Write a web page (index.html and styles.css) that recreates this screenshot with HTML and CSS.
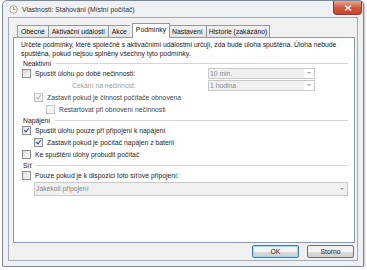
FILE: index.html
```html
<!DOCTYPE html>
<html lang="cs">
<head>
    <meta charset="UTF-8">
    <title>Vlastnosti: Stahování (Místní počítač)</title>
    <link rel="stylesheet" href="styles.css">
</head>
<body>
    <div class="window">
        <div class="titlebar">
            <svg class="app-icon" width="9" height="9" viewBox="0 0 10 10">
                <circle cx="5" cy="5" r="4.2" fill="#f6f3e6" stroke="#8a8a7a" stroke-width="0.8"/>
                <path d="M5 2.2V5h2.2" fill="none" stroke="#c0792a" stroke-width="0.9"/>
            </svg>
            <span class="title">Vlastnosti: Stahování (Místní počítač)</span>
            <div class="close">
                <svg width="8" height="6" viewBox="0 0 8 6">
                    <path d="M1 0.5l6 5M7 0.5l-6 5" stroke="#fff" stroke-width="1.5"/>
                </svg>
            </div>
        </div>

        <div class="client">
            <div class="tabs">
                <div class="tab">Obecné</div>
                <div class="tab">Aktivační události</div>
                <div class="tab">Akce</div>
                <div class="tab active">Podmínky</div>
                <div class="tab">Nastavení</div>
                <div class="tab">Historie (zakázáno)</div>
            </div>

            <div class="panel">
                <p class="intro">Určete podmínky, které společně s aktivačními událostmi určují, zda bude úloha spuštěna. Úloha nebude spuštěna, pokud nejsou splněny všechny tyto podmínky.</p>

                <div class="group">Neaktivní</div>
                <div class="row">
                    <span class="check"></span>
                    <span class="label">Spustit úlohu po době nečinnosti:</span>
                    <div class="select short disabled"><span>10 min.</span><i></i></div>
                </div>
                <div class="row">
                    <span class="label wait disabled-text">Čekání na nečinnost:</span>
                    <div class="select short disabled"><span>1 hodina</span><i></i></div>
                </div>
                <div class="row indent">
                    <span class="check checked dim"></span>
                    <span class="label disabled-soft">Zastavit pokud je činnost počítače obnovena</span>
                </div>
                <div class="row indent2">
                    <span class="check dim"></span>
                    <span class="label disabled-soft">Restartovat při obnovení nečinnosti</span>
                </div>

                <div class="group">Napájení</div>
                <div class="row">
                    <span class="check checked"></span>
                    <span class="label">Spustit úlohu pouze při připojení k napájení</span>
                </div>
                <div class="row indent">
                    <span class="check checked"></span>
                    <span class="label">Zastavit pokud je počítač napájen z baterií</span>
                </div>
                <div class="row">
                    <span class="check"></span>
                    <span class="label">Ke spuštění úlohy probudit počítač</span>
                </div>

                <div class="group">Síť</div>
                <div class="row">
                    <span class="check"></span>
                    <span class="label">Pouze pokud je k dispozici toto síťové připojení:</span>
                </div>
                <div class="row indent">
                    <div class="select wide disabled"><span>Jakékoli připojení</span><i></i></div>
                </div>
            </div>

            <div class="actions">
                <button class="default">OK</button>
                <button>Storno</button>
            </div>
        </div>
    </div>
</body>
</html>
```

FILE: styles.css
```css
body {
    margin: 0;
    background: #fff;
    font-family: "Liberation Sans", Arial, sans-serif;
    font-size: 6.8px;
    color: #1e1e1e;
}

.window {
    margin: 0 3px 0 2px;
    height: 267px;
    box-sizing: border-box;
    border: 1px solid #7d8791;
    border-radius: 5px 5px 2px 2px;
    background: #eef1f4;
    display: flex;
    flex-direction: column;
    box-shadow: 1px 1px 2px rgba(0, 0, 0, 0.25);
}

.titlebar {
    height: 16px;
    display: flex;
    align-items: center;
    padding-left: 6px;
    flex-shrink: 0;
}

.app-icon {
    margin-right: 4px;
}

.title {
    color: #333;
    flex: 1;
}

.close {
    width: 29px;
    height: 14px;
    margin: -2px 1px 0 0;
    border: 1px solid #8b3a2e;
    border-top: none;
    border-radius: 0 0 4px 4px;
    box-sizing: border-box;
    background: linear-gradient(#e8a493, #d3533b 55%, #c9452e);
    display: flex;
    align-items: center;
    justify-content: center;
}

.client {
    flex: 1;
    margin: 0 5px 5px 5px;
    background: #f0f0f0;
    border: 1px solid #a3acb6;
    display: flex;
    flex-direction: column;
    padding: 6px 2px 0 4px;
}

.tabs {
    display: flex;
    padding-left: 4px;
    height: 13px;
    align-items: flex-end;
}

.tab {
    height: 11px;
    line-height: 11px;
    padding: 0 3px;
    border: 1px solid #8e9aa5;
    border-bottom: none;
    border-right: none;
    background: linear-gradient(#f2f2f2, #e3e3e3);
    color: #111;
}

.tab:last-child {
    border-right: 1px solid #8e9aa5;
    padding: 0 2px;
}

.tab.active {
    height: 14px;
    line-height: 12px;
    padding: 0 3px;
    margin: 0 -1px 0 2px;
    background: #fff;
    border-right: 1px solid #8e9aa5;
    position: relative;
    z-index: 1;
    top: 1px;
}

.tab.active + .tab {
    border-left: none;
}

.panel {
    height: 206px;
    border: 1px solid #8e9aa5;
    background: #fff;
    padding: 3px 3px 0 7px;
    box-sizing: border-box;
}

.intro {
    margin: 0;
    height: 17px;
    line-height: 8.5px;
    color: #1a1a1a;
}

.group {
    display: flex;
    align-items: center;
    height: 8px;
    margin-top: 1px;
    padding-left: 2px;
    margin-right: 3px;
    color: #1a1a1a;
}

.group::after {
    content: "";
    flex: 1;
    margin-left: 5px;
    border-top: 1px solid #d5d5d5;
}

.row {
    display: flex;
    align-items: center;
    height: 12px;
    padding-left: 1px;
}

.row.indent {
    padding-left: 13px;
}

.row.indent2 {
    padding-left: 25px;
}

.check {
    width: 7px;
    height: 7px;
    border: 1px solid #8f8f8f;
    background: linear-gradient(135deg, #dcdcdc, #fbfbfb);
    margin-right: 4px;
    position: relative;
    flex-shrink: 0;
}

.check.checked::after {
    content: "";
    position: absolute;
    left: 2px;
    top: 0;
    width: 2px;
    height: 4px;
    border: solid #2a4d8f;
    border-width: 0 1.3px 1.3px 0;
    transform: rotate(40deg);
}

.check.dim {
    border-color: #c4c4c4;
    background: #f4f4f4;
}

.check.dim::after {
    border-color: #b0b0b0;
}

.label {
    white-space: nowrap;
}

.wait {
    margin-left: 50px;
    width: 63px;
    text-align: right;
}

.disabled-text {
    color: #a0a0a0;
}

.disabled-soft {
    color: #444;
}

.select {
    height: 9px;
    border: 1px solid #c9c9c9;
    background: #f0f0f0;
    display: flex;
    align-items: center;
    color: #8a8a8a;
    box-sizing: content-box;
}

.select span {
    flex: 1;
    padding-left: 1px;
}

.select i {
    width: 10px;
    height: 9px;
    background: #fff;
    position: relative;
}

.select i::after {
    content: "";
    position: absolute;
    left: 3px;
    top: 3px;
    border: 2px solid transparent;
    border-top: 2px solid #a0a0a0;
    border-bottom: none;
}

.select.short {
    width: 105px;
    margin-left: auto;
    margin-right: 36px;
}

.select.wide {
    flex: 1;
    height: 12px;
    margin-right: 3px;
    margin-top: 3px;
}

.select.wide i {
    height: 12px;
    background: #f0f0f0;
}

.select.wide i::after {
    top: 5px;
}

.actions {
    display: flex;
    justify-content: flex-end;
    gap: 8px;
    padding: 2px 1px 0 0;
}

button {
    width: 47px;
    height: 13px;
    padding: 0;
    font-family: inherit;
    font-size: 6.8px;
    color: #222;
    border: 1px solid #707070;
    border-radius: 2px;
    background: linear-gradient(#f2f2f2 50%, #dddddd 50%, #cfcfcf);
}

button.default {
    border-color: #3c7fb1;
    box-shadow: inset 0 0 0 1px #9fd5f5;
}
```
